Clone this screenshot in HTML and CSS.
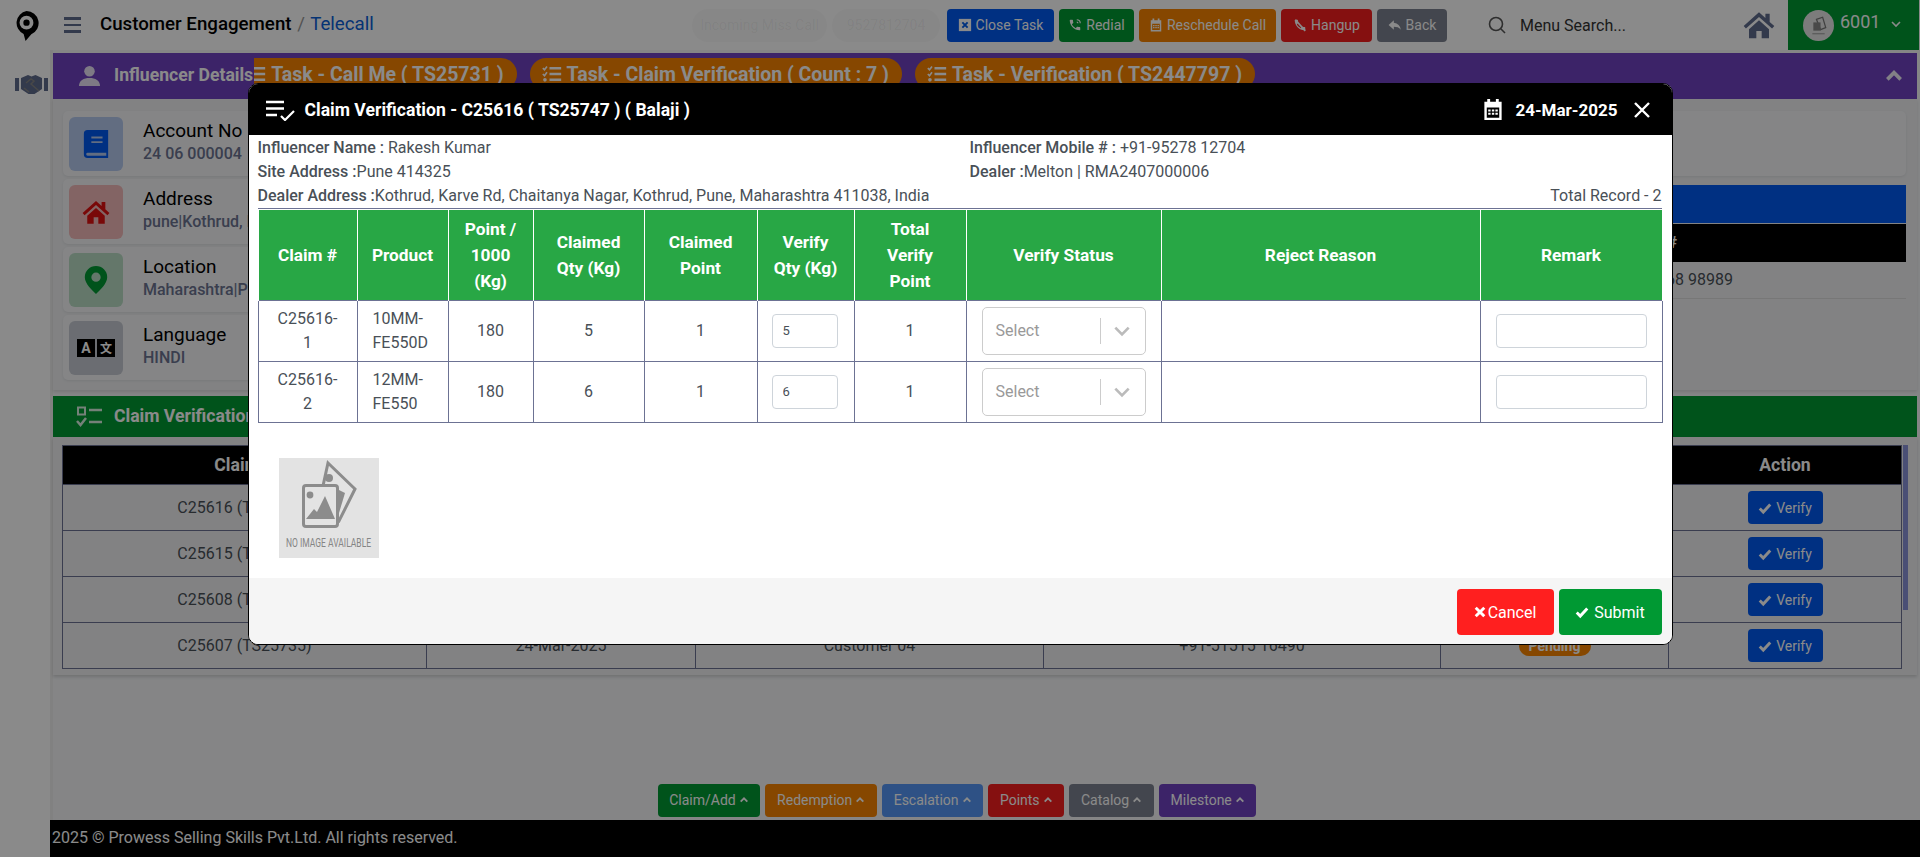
FILE: index.html
```html
<!DOCTYPE html>
<html lang="en">
<head>
  <meta charset="UTF-8">
  <meta name="viewport" content="width=device-width, initial-scale=1.0">
  <title>Customer Engagement / Telecall</title>
  <link rel="stylesheet" href="styles.css">
</head>
<body>
  <svg class="icon-defs" aria-hidden="true">
    <symbol id="i-tasks" viewBox="0 0 24 24">
      <path d="M9 5h14M9 12h14M9 19h14" fill="none" stroke="currentColor" stroke-width="3"/>
      <path d="M1 5l2 2 3-4M1 12l2 2 3-4" fill="none" stroke="currentColor" stroke-width="2"/>
      <circle cx="3.5" cy="19" r="2.2" fill="currentColor"/>
    </symbol>
    <symbol id="i-check" viewBox="0 0 24 24">
      <path d="M3 13l6 6L21 6" fill="none" stroke="currentColor" stroke-width="5"/>
    </symbol>
    <symbol id="i-up" viewBox="0 0 12 12">
      <path d="M2 8l4-4 4 4" fill="none" stroke="currentColor" stroke-width="2.2"/>
    </symbol>
    <symbol id="i-down" viewBox="0 0 12 12">
      <path d="M2 4l4 4 4-4" fill="none" stroke="currentColor" stroke-width="1.6"/>
    </symbol>
    <symbol id="i-phone" viewBox="0 0 24 24">
      <path fill="currentColor" d="M6.6 10.800c1.400 2.800 3.800 5.100 6.600 6.600l2.200-2.200c.3-.3.7-.4 1-.2 1.100.4 2.300.6 3.600.6.600 0 1 .4 1 1V20c0 .6-.4 1-1 1C10.600 21 3 13.400 3 4c0-.6.4-1 1-1h3.500c.6 0 1 .4 1 1 0 1.300.2 2.500.6 3.600.1.300 0 .7-.2 1z"/>
    </symbol>
    <symbol id="i-calendar" viewBox="0 0 20 24">
      <path fill="currentColor" fill-rule="evenodd" d="M1 4h3V1h3v3h6V1h3v3h3v19H1zM3.500 10v10.500h13V10zM5 12h2.500v2H5zm3.800 0h2.500v2H8.800zm3.700 0H15v2h-2.500zM5 15.500h2.500v2H5zm3.800 0h2.500v2H8.800zm3.700 0H15v2h-2.500z"/>
    </symbol>
    <symbol id="i-home" viewBox="0 0 24 24">
      <path fill="currentColor" d="M12 2.500L.5 12.800l1.700 1.900L12 6l9.800 8.700 1.700-1.900-3.500-3.100V3.500h-3.200v3.300z"/>
      <path fill="currentColor" d="M4.500 15.200L12 8.500l7.500 6.700V22H14v-5.500h-4V22H4.500z"/>
    </symbol>
  </svg>

  <div class="app">
    <header class="topbar">
      <svg class="logo" viewBox="0 0 26 32" aria-hidden="true">
        <path d="M13 .5a12.500 12.500 0 0 1 5 24L12 31.500l-2-7.300A12.500 12.500 0 0 1 13 .5z" fill="#000"/>
        <circle cx="13" cy="12.500" r="7.200" fill="#fff"/>
        <circle cx="13" cy="12.500" r="3.300" fill="#000"/>
      </svg>
      <div class="hamburger"><span></span><span></span><span></span></div>
      <div class="crumb"><b>Customer Engagement</b> <i>/</i> <a>Telecall</a></div>
      <div class="top-actions">
        <span class="ghost ghost-1">Incoming Miss Call</span>
        <span class="ghost ghost-2">9527812704</span>
        <button class="btn blue btn-close">
          <svg class="ico" viewBox="0 0 16 16"><rect x="1" y="1" width="14" height="14" fill="currentColor"/><path d="M5 5l6 6M11 5l-6 6" stroke="#005bea" stroke-width="2.200"/></svg>
          Close Task</button>
        <button class="btn green btn-redial">
          <svg class="ico" viewBox="0 0 24 24"><use href="#i-phone"/><path d="M15 3a6 6 0 0 1 6 6M15 7a2 2 0 0 1 2 2" fill="none" stroke="currentColor" stroke-width="2"/></svg>
          Redial</button>
        <button class="btn orange btn-resched"><svg class="ico"><use href="#i-calendar"/></svg>Reschedule Call</button>
        <button class="btn red btn-hangup"><svg class="ico" viewBox="0 0 24 24"><use href="#i-phone"/><path d="M4 3l17 19" stroke="currentColor" stroke-width="3"/></svg>Hangup</button>
        <button class="btn slate btn-back"><svg class="ico" viewBox="0 0 24 24"><path fill="currentColor" d="M10 4L1 12l9 8v-5c5 0 9 1 12 5-1-7-5-11-12-12z"/></svg>Back</button>
      </div>
      <div class="search">
        <svg viewBox="0 0 18 18"><circle cx="8" cy="8" r="6.500" fill="none" stroke="currentColor" stroke-width="1.600"/><path d="M13 13l4 4" stroke="currentColor" stroke-width="1.600"/></svg>
        <span>Menu Search...</span>
      </div>
      <svg class="home-link"><use href="#i-home"/></svg>
      <div class="user">
        <span class="avatar">
          <svg viewBox="0 0 30 30"><path d="M13 9l6-2 3 10-5 2z" fill="none" stroke="#777" stroke-width="1.200"/><path d="M10 12h7v8h-7z" fill="#888"/><path d="M9 23h12" stroke="#999"/></svg>
        </span>
        <span class="user-id">6001</span>
        <svg class="user-caret"><use href="#i-down"/></svg>
      </div>
    </header>

    <div class="shell">
      <aside class="rail">
        <svg viewBox="0 0 33 20" aria-hidden="true">
          <path fill="currentColor" d="M0 4h4v13H0zM29 4h4v13h-4z"/>
          <path fill="currentColor" d="M6 4l7-3 3.500 1.500 4-1.500 6.500 3v11l-7.500 5h-6L6 15z"/>
          <path fill="none" stroke="#858585" stroke-width="1.500" d="M11 9l5-4 3 2-3 3 8 7M9 14l5 4"/>
        </svg>
      </aside>
      <div class="content">
        <section class="panel">
          <div class="bar bar-purple">
            <svg class="bar-icon" viewBox="0 0 24 24"><circle cx="12" cy="6.500" r="5.500" fill="currentColor"/><path fill="currentColor" d="M1 22c0-6 5-8.500 11-8.500S23 16 23 22z"/></svg>
            <span class="bar-title">Influencer Details</span>
            <div class="task-tabs">
              <span class="task-pill first"><svg class="pill-ico"><use href="#i-tasks"/></svg>Task - Call Me ( TS25731 )</span>
              <span class="task-pill"><svg class="pill-ico"><use href="#i-tasks"/></svg>Task - Claim Verification ( Count : 7 )</span>
              <span class="task-pill"><svg class="pill-ico"><use href="#i-tasks"/></svg>Task - Verification ( TS2447797 )</span>
            </div>
            <svg class="bar-toggle"><use href="#i-up"/></svg>
          </div>
          <div class="details">
            <div class="info-list">
              <div class="info-card">
                <span class="tile tile-blue">
                  <svg viewBox="0 0 26 30"><path fill="currentColor" fill-rule="evenodd" d="M4 0h22v30H4a4 4 0 0 1-4-4V4a4 4 0 0 1 4-4zM8 7v2h12V7zm0 5v2h12v-2zM4 24.500a1.500 1.500 0 0 0 0 3h20v-3z"/></svg>
                </span>
                <div class="info-text"><h5>Account No</h5><p>24 06 000004</p></div>
              </div>
              <div class="info-card">
                <span class="tile tile-red"><svg><use href="#i-home"/></svg></span>
                <div class="info-text"><h5>Address</h5><p>pune|Kothrud, Pune</p></div>
              </div>
              <div class="info-card">
                <span class="tile tile-green">
                  <svg viewBox="0 0 24 30"><path fill="currentColor" fill-rule="evenodd" d="M12 0a12 12 0 0 1 12 12c0 7-8 14-12 18C8 26 0 19 0 12A12 12 0 0 1 12 0zm0 7a5 5 0 1 0 0 10 5 5 0 0 0 0-10z"/></svg>
                </span>
                <div class="info-text"><h5>Location</h5><p>Maharashtra|Pune</p></div>
              </div>
              <div class="info-card">
                <span class="tile tile-slate"><span class="lang-a">A</span><span class="lang-b">文</span></span>
                <div class="info-text"><h5>Language</h5><p>HINDI</p></div>
              </div>
            </div>
            <div class="contact">
              <div class="contact-card"></div>
              <div class="contact-head">Contact</div>
              <div class="contact-sub">Mobile #</div>
              <div class="contact-value">+91-96668 98989</div>
            </div>
          </div>
        </section>

        <div class="bar bar-green">
          <svg class="bar-icon" viewBox="0 0 26 22"><path d="M2 1.500h7v7H2z" fill="none" stroke="currentColor" stroke-width="2"/><path d="M13 4h13M13 16h13" stroke="currentColor" stroke-width="2.500"/><path d="M1 15l3.500 4L10 12" fill="none" stroke="currentColor" stroke-width="2.500"/></svg>
          <span class="bar-title">Claim Verification</span>
        </div>
        <section class="claims">
          <table class="claims-table">
            <colgroup><col class="c1"><col class="c2"><col class="c3"><col class="c4"><col class="c5"><col></colgroup>
            <thead><tr><th>Claim #</th><th>Date</th><th>Customer</th><th>Mobile #</th><th>Status</th><th>Action</th></tr></thead>
            <tbody>
              <tr><td>C25616 (TS25747)</td><td>24-Mar-2025</td><td>Balaji</td><td>+91-95278 12704</td><td><span class="badge">Pending</span></td><td><button class="btn blue verify"><svg class="ico"><use href="#i-check"/></svg>Verify</button></td></tr>
              <tr><td>C25615 (TS25746)</td><td>24-Mar-2025</td><td>Customer 02</td><td>+91-51515 16490</td><td><span class="badge">Pending</span></td><td><button class="btn blue verify"><svg class="ico"><use href="#i-check"/></svg>Verify</button></td></tr>
              <tr><td>C25608 (TS25736)</td><td>24-Mar-2025</td><td>Customer 03</td><td>+91-51515 16490</td><td><span class="badge">Pending</span></td><td><button class="btn blue verify"><svg class="ico"><use href="#i-check"/></svg>Verify</button></td></tr>
              <tr><td>C25607 (TS25735)</td><td>24-Mar-2025</td><td>Customer 04</td><td>+91-51515 16490</td><td><span class="badge">Pending</span></td><td><button class="btn blue verify"><svg class="ico"><use href="#i-check"/></svg>Verify</button></td></tr>
            </tbody>
          </table>
          <div class="claims-scroll"></div>
        </section>

        <nav class="quick-links">
          <button class="btn green">Claim/Add<svg class="caret"><use href="#i-up"/></svg></button>
          <button class="btn orange">Redemption<svg class="caret"><use href="#i-up"/></svg></button>
          <button class="btn sky">Escalation<svg class="caret"><use href="#i-up"/></svg></button>
          <button class="btn red">Points<svg class="caret"><use href="#i-up"/></svg></button>
          <button class="btn slate">Catalog<svg class="caret"><use href="#i-up"/></svg></button>
          <button class="btn purple">Milestone<svg class="caret"><use href="#i-up"/></svg></button>
        </nav>
        <footer class="page-foot">2025 © Prowess Selling Skills Pvt.Ltd. All rights reserved.</footer>
      </div>
    </div>
  </div>

  <!-- Claim verification popup -->
  <div class="overlay">
    <div class="modal">
      <div class="modal-head">
        <svg class="modal-ico" viewBox="0 0 30 22"><path d="M1 3h18M1 9.500h18M1 16h11" stroke="#fff" stroke-width="2.500"/><path d="M16 17l4 4 9-9" fill="none" stroke="#fff" stroke-width="2.200"/></svg>
        <span class="modal-title">Claim Verification - C25616 ( TS25747 ) ( Balaji )</span>
        <svg class="modal-cal"><use href="#i-calendar"/></svg>
        <span class="modal-date">24-Mar-2025</span>
        <svg class="modal-x" viewBox="0 0 18 16"><path d="M2 1l14 14M16 1L2 15" stroke="#fff" stroke-width="2.400"/></svg>
      </div>
      <div class="modal-body">
        <div class="meta-row">
          <div class="meta-left"><b>Influencer Name :</b> Rakesh Kumar</div>
          <div><b>Influencer Mobile # :</b> +91-95278 12704</div>
        </div>
        <div class="meta-row">
          <div class="meta-left"><b>Site Address :</b>Pune 414325</div>
          <div><b>Dealer :</b>Melton | RMA2407000006</div>
        </div>
        <div class="meta-row meta-last">
          <div><b>Dealer Address :</b>Kothrud, Karve Rd, Chaitanya Nagar, Kothrud, Pune, Maharashtra 411038, India</div>
          <div>Total Record - 2</div>
        </div>
        <div class="verify-wrap">
          <table class="verify-table">
            <colgroup>
              <col class="w99"><col class="w91"><col class="w85"><col class="w111"><col class="w113">
              <col class="w97"><col class="w112"><col class="w195"><col class="w319"><col class="w182">
            </colgroup>
            <thead>
              <tr>
                <th>Claim #</th><th>Product</th><th>Point / 1000 (Kg)</th><th>Claimed Qty (Kg)</th><th>Claimed Point</th>
                <th>Verify Qty (Kg)</th><th>Total Verify Point</th><th>Verify Status</th><th>Reject Reason</th><th>Remark</th>
              </tr>
            </thead>
            <tbody>
              <tr>
                <td>C25616-1</td><td class="left">10MM-FE550D</td><td>180</td><td>5</td><td>1</td>
                <td><input class="field qty" value="5"></td><td>1</td>
                <td><div class="select"><span>Select</span><i></i><svg><use href="#i-down"/></svg></div></td>
                <td></td><td><input class="field remark"></td>
              </tr>
              <tr>
                <td>C25616-2</td><td class="left">12MM-FE550</td><td>180</td><td>6</td><td>1</td>
                <td><input class="field qty" value="6"></td><td>1</td>
                <td><div class="select"><span>Select</span><i></i><svg><use href="#i-down"/></svg></div></td>
                <td></td><td><input class="field remark"></td>
              </tr>
            </tbody>
          </table>
        </div>
        <div class="no-image">
          <svg viewBox="0 0 100 100">
            <path d="M49 5l27 26-16 32-21-12z" fill="none" stroke="#8c8c8c" stroke-width="3"/>
            <circle cx="50" cy="20" r="4" fill="#8c8c8c"/>
            <path d="M58 31l8 4-6 20-2 0z" fill="#8c8c8c"/>
            <rect x="24.500" y="27.500" width="34" height="41" rx="2.500" fill="#e3e3e3" stroke="#8c8c8c" stroke-width="3"/>
            <circle cx="31" cy="37" r="3.400" fill="#8c8c8c"/>
            <path d="M27 61l8-10 3 3 8-16 10 23z" fill="#8c8c8c"/>
            <text transform="translate(7 89) scale(.63 1)">NO IMAGE AVAILABLE</text>
          </svg>
        </div>
      </div>
      <div class="modal-foot">
        <button class="foot-btn cancel"><svg viewBox="0 0 14 14"><path d="M2 2l10 10M12 2L2 12" stroke="#fff" stroke-width="3.400"/></svg>Cancel</button>
        <button class="foot-btn submit"><svg class="foot-check"><use href="#i-check"/></svg>Submit</button>
      </div>
    </div>
  </div>
</body>
</html>
```

FILE: styles.css
```css
* {
  box-sizing: border-box;
}
html, body {
  height: 100%;
}
body {
  margin: 0;
  font-family: Roboto, "Noto Sans", sans-serif;
  font-size: 16px;
  color: #495057;
  background: #f5f6f8;
  overflow: hidden;
}
button, input {
  font-family: inherit;
}
.icon-defs {
  display: none;
}
.app {
  height: 100vh;
  display: flex;
  flex-direction: column;
}

/* top bar */
.topbar {
  height: 50px;
  flex: none;
  display: flex;
  align-items: center;
  background: #fff;
  padding-left: 14px;
}
.logo {
  width: 25px;
  height: 32px;
  margin-top: 2px;
}
.hamburger {
  width: 17px;
  margin-left: 25px;
  display: flex;
  flex-direction: column;
  gap: 4px;
}
.hamburger span {
  height: 2.500px;
  background: #5f6b8c;
}
.crumb {
  margin-left: 19px;
  margin-top: -2px;
  font-size: 18.7px;
  white-space: nowrap;
  width: 592px;
}
.crumb b {
  font-weight: 500;
  color: #000;
}
.crumb i {
  font-style: normal;
  color: #999;
  margin: 0 1px;
}
.crumb a {
  color: #0b5ed7;
}
.top-actions {
  display: flex;
  gap: 5px;
}
.ghost {
  height: 33px;
  line-height: 33px;
  border-radius: 17px;
  background: rgba(0, 0, 0, .025);
  color: rgba(0, 0, 0, .05);
  text-align: center;
  font-size: 14px;
  overflow: hidden;
  white-space: nowrap;
}
.ghost-1 { width: 135px; }
.ghost-2 { width: 108px; margin-right: 2px; }
.btn {
  height: 33px;
  border: 0;
  border-radius: 4px;
  padding: 0;
  color: #fff;
  font-size: 14px;
  display: inline-flex;
  align-items: center;
  justify-content: center;
  white-space: nowrap;
}
.ico {
  width: 14px;
  height: 14px;
  margin-right: 4px;
  flex: none;
}
.blue { background: #0059f0; }
.green { background: #009933; }
.orange { background: #f78400; }
.red { background: #f61e1e; }
.slate { background: #7d8290; }
.sky { background: #5597f5; }
.purple { background: #6f42c1; }
.btn-close { width: 107px; }
.btn-redial { width: 75px; }
.btn-resched { width: 137px; }
.btn-hangup { width: 91px; }
.btn-back { width: 70px; }
.search {
  margin-left: 41px;
  width: 255px;
  display: flex;
  align-items: center;
  color: #333;
  font-size: 16px;
}
.search svg {
  width: 18px;
  height: 18px;
  margin-right: 14px;
  color: #555;
}
.home-link {
  width: 32px;
  height: 32px;
  color: #5f6b8c;
  flex: none;
}
.user {
  width: 131px;
  height: 50px;
  margin-left: 13px;
  margin-right: 1px;
  flex: none;
  background: #009933;
  display: flex;
  align-items: center;
  padding-left: 15px;
  color: #fff;
}
.avatar {
  width: 31px;
  height: 31px;
  border-radius: 50%;
  background: #e6e6e6;
  flex: none;
}
.avatar svg {
  width: 31px;
  height: 31px;
  display: block;
}
.user-id {
  font-size: 18px;
  margin-left: 6px;
  margin-top: -7px;
}
.user-caret {
  width: 12px;
  height: 12px;
  margin-left: 10px;
  margin-top: -3px;
}

/* page under the popup */
.shell {
  flex: 1;
  min-height: 0;
  display: flex;
}
.rail {
  width: 53px;
  flex: none;
  background: #fff;
  border-right: 3px solid #eee;
  color: #5f6b8c;
  padding: 24px 0 0 15px;
}
.rail svg {
  width: 33px;
  height: 20px;
  display: block;
}
.content {
  flex: 1;
  min-width: 0;
  display: flex;
  flex-direction: column;
  padding-top: 3px;
  margin-left: -3px;
  position: relative;
}
.panel, .bar-green, .claims {
  margin-left: 3px;
  margin-right: 3px;
}
.bar {
  display: flex;
  align-items: center;
  color: #fff;
}
.bar-purple {
  height: 46px;
  background: #6f42c1;
  padding-left: 25px;
}
.bar-green {
  height: 41px;
  margin-top: 6px;
  background: #009933;
  padding-left: 23px;
}
.bar-icon {
  width: 23px;
  height: 23px;
  flex: none;
  margin-right: 13px;
  opacity: .85;
}
.bar-green .bar-icon {
  width: 26px;
  height: 22px;
  margin-right: 12px;
}
.bar-title {
  font-size: 17.6px;
  font-weight: 700;
  white-space: nowrap;
  margin-top: -2px;
  margin-right: 1px;
}
.task-tabs {
  flex: 1;
  min-width: 0;
  display: flex;
  align-items: flex-start;
  gap: 13px;
  height: 46px;
  padding-top: 5px;
  overflow: hidden;
}
.task-pill {
  height: 32px;
  padding: 0 13px 0 12px;
  border-radius: 16px;
  background: #f78400;
  font-size: 19.500px;
  font-weight: 700;
  display: inline-flex;
  align-items: center;
  white-space: nowrap;
}
.task-pill.first {
  margin-left: -20px;
}
.pill-ico {
  width: 20px;
  height: 20px;
  margin-right: 5px;
  flex: none;
}
.bar-toggle {
  width: 20px;
  height: 20px;
  margin-right: 13px;
  margin-left: 10px;
  opacity: .9;
}
.details {
  height: 291px;
  padding: 12px 11px 0 10px;
  display: grid;
  grid-template-columns: 560px 1fr;
  gap: 10px;
  background: #f0f1f3;
  box-shadow: 0 2px 3px rgba(0, 0, 0, .1);
}
.info-list {
  display: flex;
  flex-direction: column;
  gap: 3px;
}
.info-card {
  height: 65px;
  display: flex;
  align-items: center;
  padding-left: 6px;
  background: #f5f6f8;
  border-radius: 5px;
  box-shadow: 0 1px 3px rgba(0, 0, 0, .08);
}
.tile {
  width: 54px;
  height: 54px;
  flex: none;
  border-radius: 6px;
  margin-right: 20px;
  display: flex;
  align-items: center;
  justify-content: center;
}
.tile svg {
  width: 34px;
  height: 28px;
}
.tile-blue { background: #b5c9ef; color: #0059f0; }
.tile-red { background: #f3b9b9; color: #e01010; }
.tile-green { background: #b9dcc5; color: #009933; }
.tile-slate { background: #c6cad2; gap: 2px; }
.lang-a, .lang-b {
  width: 18px;
  height: 18px;
  background: #000;
  color: #fff;
  font-size: 14px;
  font-weight: 700;
  line-height: 18px;
  text-align: center;
}
.lang-b {
  font-family: "Noto Sans CJK SC", sans-serif;
  font-size: 12px;
}
.info-text {
  margin-top: -3px;
}
.info-card h5 {
  margin: 0;
  font-size: 19px;
  font-weight: 400;
  color: #000;
  line-height: 24px;
}
.info-card p {
  margin: 0;
  font-size: 16px;
  font-weight: 500;
  color: #6b7390;
  line-height: 22px;
}
.contact-card {
  height: 65px;
  background: #f5f6f8;
  border-radius: 5px;
  box-shadow: 0 1px 3px rgba(0, 0, 0, .08);
}
.contact-head {
  height: 38px;
  margin-top: 9px;
  background: #0059f0;
  color: #fff;
  line-height: 38px;
  padding-left: 20px;
}
.contact-sub {
  height: 38px;
  margin-top: 1px;
  background: #000;
  color: #fff;
  font-weight: 700;
  line-height: 38px;
  text-align: right;
  padding-right: 229px;
}
.contact-value {
  height: 37px;
  line-height: 36px;
  font-size: 16px;
  text-align: right;
  padding-right: 173px;
  border-bottom: 1px solid #ddd;
}
.claims {
  height: 238px;
  padding: 8px 9px 0;
  background: #f0f1f3;
  box-shadow: 0 2px 3px rgba(0, 0, 0, .15);
  display: flex;
  align-items: flex-start;
}
.claims-table {
  width: 1840px;
  table-layout: fixed;
  border-collapse: collapse;
  font-size: 16px;
}
.c1 { width: 364px; }
.c2 { width: 269px; }
.c3 { width: 348px; }
.c4 { width: 397px; }
.c5 { width: 228px; }
.claims-table th, .claims-table td {
  border: 1px solid #6c7293;
  text-align: center;
}
.claims-table th {
  height: 39px;
  background: #000;
  color: #fff;
  font-size: 17.6px;
  font-weight: 700;
}
.claims-table td {
  height: 46px;
}
.badge {
  display: inline-block;
  width: 72px;
  height: 20px;
  line-height: 20px;
  border-radius: 10px;
  background: #f78400;
  color: #fff;
  font-weight: 700;
  font-size: 14px;
}
.verify {
  width: 75px;
  height: 33px;
}
.claims-scroll {
  width: 5px;
  height: 165px;
  margin-left: 1px;
  background: #8a93d8;
}
.quick-links {
  margin-top: auto;
  display: flex;
  justify-content: center;
  gap: 5px;
  padding-right: 56px;
  margin-bottom: 3px;
}
.quick-links .btn {
  padding: 0 11.700px 2px;
}
.caret {
  width: 10px;
  height: 10px;
  margin-left: 3px;
}
.page-foot {
  height: 37px;
  flex: none;
  background: #000;
  color: #fff;
  padding-left: 2px;
  line-height: 35px;
  font-size: 16px;
}

/* popup */
.overlay {
  position: fixed;
  inset: 0;
  background: rgba(0, 0, 0, .46);
  display: flex;
  justify-content: center;
  align-items: flex-start;
  padding-top: 83px;
}
.modal {
  width: 1425px;
  height: 562px;
  display: flex;
  flex-direction: column;
  background: #fff;
  border: 1px solid #000;
  border-radius: 10px;
  overflow: hidden;
}
.modal-head {
  height: 51px;
  flex: none;
  background: #000;
  color: #fff;
  display: flex;
  align-items: center;
  padding-left: 16px;
}
.modal-ico {
  width: 30px;
  height: 22px;
  margin-right: 10px;
}
.modal-title, .modal-date {
  font-size: 17.6px;
  font-weight: 700;
  white-space: nowrap;
}
.modal-date {
  font-size: 17px;
}
.modal-cal {
  width: 20px;
  height: 23px;
  color: #fff;
  margin-left: auto;
  margin-right: 12px;
}
.modal-x {
  width: 18px;
  height: 16px;
  margin-left: 15px;
  margin-right: 21px;
}
.modal-body {
  flex: 1;
  padding: 1px 10px 0;
}
.meta-row {
  display: flex;
  height: 24px;
  line-height: 24px;
  margin-left: -1px;
}
.meta-row b {
  font-weight: 500;
}
.meta-left {
  width: 712px;
}
.meta-last {
  justify-content: space-between;
}
.verify-wrap {
  margin-left: -1px;
  border-top: 1px solid #6c7293;
  padding-top: 1px;
}
.verify-table {
  width: 1404px;
  table-layout: fixed;
  border-collapse: collapse;
  font-size: 16px;
}
.w99 { width: 99px; }
.w91 { width: 91px; }
.w85 { width: 85px; }
.w111 { width: 111px; }
.w113 { width: 113px; }
.w97 { width: 97px; }
.w112 { width: 112px; }
.w195 { width: 195px; }
.w319 { width: 319px; }
.w182 { width: 182px; }
.verify-table th {
  height: 90px;
  background: #28a745;
  color: #fff;
  font-size: 17.300px;
  font-weight: 700;
  line-height: 26px;
  padding: 0 14px;
  border-left: 1px solid #fff;
  border-right: 1px solid #fff;
}
.verify-table td {
  height: 61px;
  border: 1px solid #6c7293;
  text-align: center;
  padding: 0 15px;
  line-height: 24px;
}
.verify-table td:first-child {
  padding: 0 17px;
}
.verify-table td.left {
  text-align: left;
}
.field {
  display: block;
  height: 34px;
  border: 1px solid #ced4da;
  border-radius: 4px;
  padding: 0 10px;
  font-size: 13px;
  color: #495057;
  background: #fff;
}
.qty {
  width: 66px;
  margin-left: -1px;
}
.remark {
  width: 100%;
}
.select {
  height: 48px;
  display: flex;
  align-items: center;
  border: 1px solid #ccc;
  border-radius: 5px;
  padding-left: 13px;
  color: #999;
  text-align: left;
}
.select span {
  width: 104px;
}
.select i {
  width: 1px;
  height: 26px;
  background: #ccc;
}
.select svg {
  width: 20px;
  height: 20px;
  margin-left: 11px;
  color: #bbb;
}
.no-image {
  width: 100px;
  height: 100px;
  margin: 35px 0 0 20px;
  background: #e3e3e3;
}
.no-image svg {
  width: 100px;
  height: 100px;
  display: block;
}
.no-image text {
  font-family: Roboto, sans-serif;
  font-size: 13.500px;
  fill: #858585;
}
.modal-foot {
  height: 66px;
  flex: none;
  background: #f5f5f5;
  display: flex;
  justify-content: flex-end;
  align-items: center;
  gap: 5px;
  padding-right: 10px;
  padding-top: 2px;
}
.foot-btn {
  height: 46px;
  border: 0;
  border-radius: 4px;
  color: #fff;
  font-size: 16px;
  display: inline-flex;
  align-items: center;
  justify-content: center;
}
.cancel {
  width: 97px;
  background: #ff1f1f;
}
.cancel svg {
  width: 12px;
  height: 12px;
  margin-right: 2px;
}
.submit {
  width: 103px;
  background: #009933;
}
.foot-check {
  width: 14px;
  height: 14px;
  margin-right: 5px;
}
```
